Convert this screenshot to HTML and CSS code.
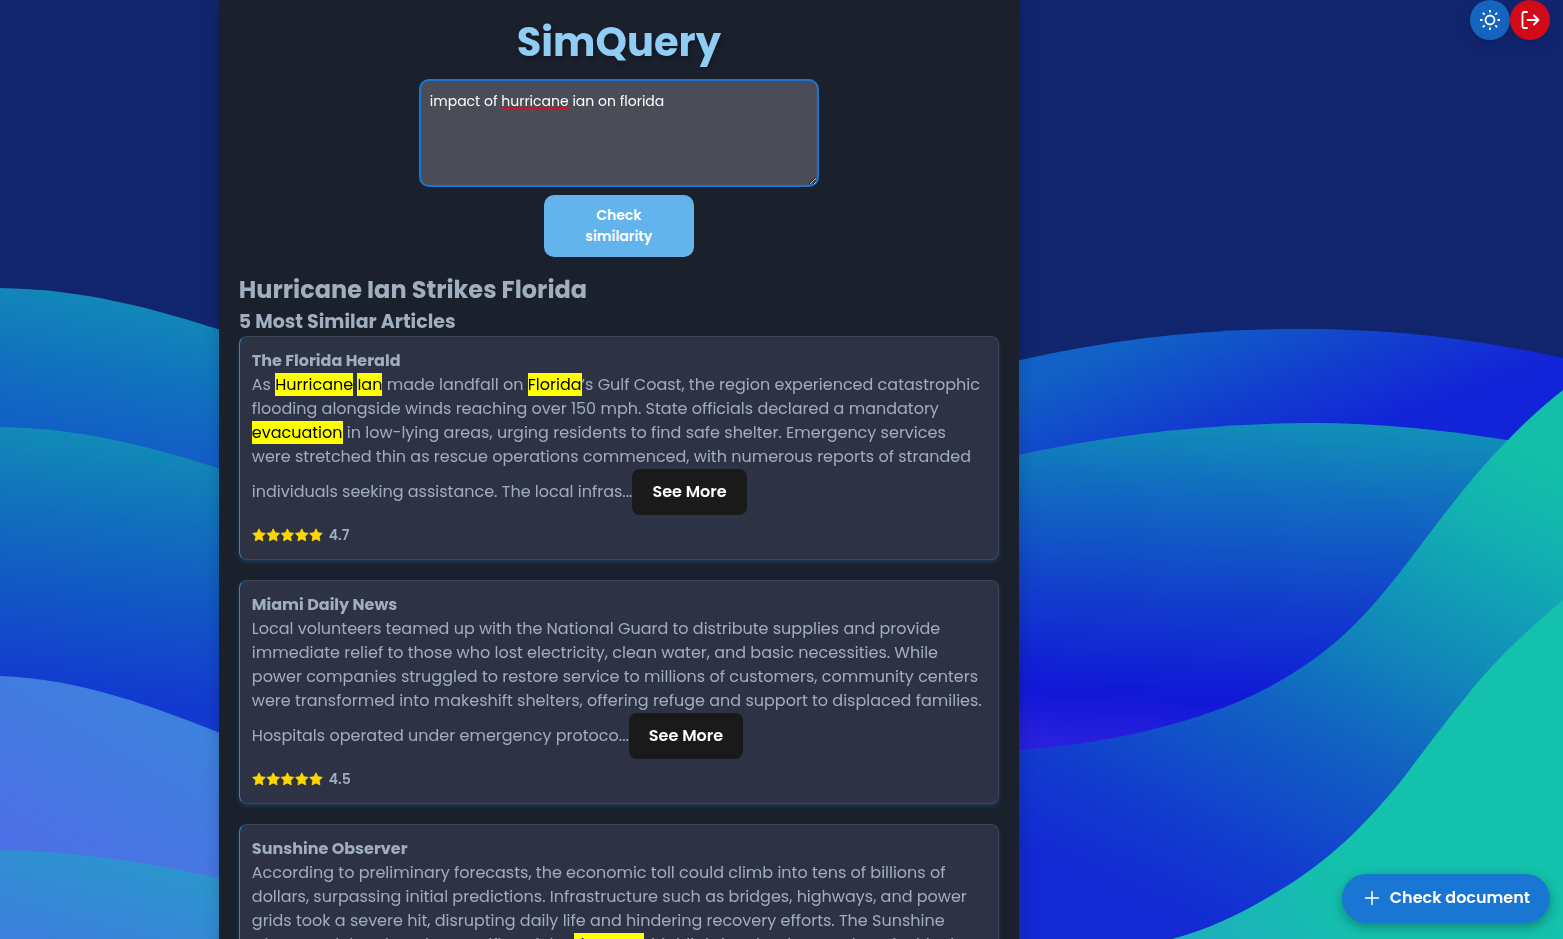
FILE: index.html
```html
<!DOCTYPE html>
<html lang="en">
<head>
<meta charset="utf-8">
<title>SimQuery</title>
<link rel="stylesheet" href="styles.css">
</head>
<body>
<svg class="backdrop" viewBox="0 0 1563 939" preserveAspectRatio="none" aria-hidden="true">
  <defs>
    <linearGradient id="l1" gradientUnits="userSpaceOnUse" x1="60" y1="288" x2="30" y2="470"><stop offset="0" stop-color="#1189b8"/><stop offset=".6" stop-color="#1168c2"/><stop offset="1" stop-color="#1355ca"/></linearGradient>
    <linearGradient id="l2" gradientUnits="userSpaceOnUse" x1="60" y1="420" x2="30" y2="690"><stop offset="0" stop-color="#118fb6"/><stop offset=".4" stop-color="#116abf"/><stop offset="1" stop-color="#1339d0"/></linearGradient>
    <linearGradient id="l3" gradientUnits="userSpaceOnUse" x1="160" y1="690" x2="40" y2="890"><stop offset="0" stop-color="#3c82dc"/><stop offset="1" stop-color="#4f6ee8"/></linearGradient>
    <linearGradient id="l4" gradientUnits="userSpaceOnUse" x1="150" y1="850" x2="120" y2="960"><stop offset="0" stop-color="#2b98cc"/><stop offset="1" stop-color="#3a80dc"/></linearGradient>
    <linearGradient id="r1" gradientUnits="userSpaceOnUse" x1="1180" y1="325" x2="1240" y2="480"><stop offset="0" stop-color="#1161c6"/><stop offset=".6" stop-color="#123bcf"/><stop offset="1" stop-color="#1224d8"/></linearGradient>
    <linearGradient id="r2" gradientUnits="userSpaceOnUse" x1="1240" y1="420" x2="1220" y2="750"><stop offset="0" stop-color="#118fb8"/><stop offset=".25" stop-color="#1168c2"/><stop offset=".55" stop-color="#123ecc"/><stop offset=".85" stop-color="#1118d8"/><stop offset="1" stop-color="#2820dc"/></linearGradient>
    <linearGradient id="r3" gradientUnits="userSpaceOnUse" x1="1500" y1="440" x2="1250" y2="960"><stop offset="0" stop-color="#13bfa8"/><stop offset=".15" stop-color="#12b0b2"/><stop offset=".4" stop-color="#1187ba"/><stop offset=".58" stop-color="#1163c2"/><stop offset=".85" stop-color="#123acf"/><stop offset="1" stop-color="#1229d4"/></linearGradient>
    <linearGradient id="r4" gradientUnits="userSpaceOnUse" x1="1180" y1="960" x2="1330" y2="860"><stop offset="0" stop-color="#20acc0"/><stop offset="1" stop-color="#13c1ac"/></linearGradient>
  </defs>
  <rect width="1563" height="939" fill="#11256f"/>
  <path fill="url(#l1)" d="M0 288C80 289 150 307 230 333V939H0Z"/>
  <path fill="url(#l2)" d="M0 427C80 428 150 446 230 472V939H0Z"/>
  <path fill="url(#l3)" d="M0 676C80 679 150 705 230 737V939H0Z"/>
  <path fill="url(#l4)" d="M0 850C80 852 150 862 230 881V939H0Z"/>
  <path fill="url(#r1)" d="M1000 365C1100 340 1200 329 1300 329C1400 329 1480 340 1563 358V939H1000Z"/>
  <path fill="url(#r2)" d="M1000 459C1100 436 1200 424 1310 423C1380 423 1450 430 1530 444V939H1000Z"/>
  <path fill="url(#r3)" d="M1000 750C1080 750 1200 725 1269 687C1297 672 1325 653 1349 630C1368 612 1386 590 1401 571C1436 525 1470 478 1508 440C1526 421 1545 404 1563 390V939H1000Z"/>
  <path fill="url(#r4)" d="M1150 945L1172 939C1207 930 1240 914 1272 895C1300 879 1325 860 1349 838C1368 820 1386 799 1401 781C1430 743 1458 705 1484 675C1510 646 1537 622 1563 600V945Z"/>
</svg>

<nav class="tools" aria-label="Session">
  <button class="tool tool-theme" type="button" aria-label="Toggle theme">
    <svg viewBox="0 0 24 24" width="24" height="24" fill="none" stroke="currentColor" stroke-width="1.8"><circle cx="12" cy="12" r="4.5"/><path d="M12 2v2.500M12 19.500v2.500M2 12h2.500M19.500 12h2.500M4.900 4.900l1.800 1.800M17.300 17.300l1.800 1.800M4.900 19.100l1.800-1.800M17.300 6.700l1.800-1.800"/></svg>
  </button>
  <button class="tool tool-exit" type="button" aria-label="Log out">
    <svg viewBox="0 0 24 24" width="24" height="24" fill="none" stroke="currentColor" stroke-width="1.800" stroke-linecap="round" stroke-linejoin="round"><path d="M9 4H6a1.500 1.500 0 0 0-1.500 1.500v13A1.500 1.500 0 0 0 6 20H9M9.500 12h11M16 7.500l4.500 4.500-4.500 4.500"/></svg>
  </button>
</nav>

<main class="panel">
  <h1 class="brand">SimQuery</h1>
  <form class="query">
    <textarea class="query-text" aria-label="Query" spellcheck="false">impact of hurricane ian on florida</textarea>
    <svg class="squiggle" width="68" height="4" aria-hidden="true"><defs><pattern id="wave" width="4" height="4" patternUnits="userSpaceOnUse"><path d="M0 3L2 1L4 3" fill="none" stroke="#f00" stroke-width="1.2"/></pattern></defs><rect width="68" height="4" fill="url(#wave)"/></svg>
    <button class="submit" type="button">Check similarity</button>
  </form>

  <h2 class="topic">Hurricane Ian Strikes Florida</h2>
  <h3 class="subtopic">5 Most Similar Articles</h3>

  <article class="card">
    <h4 class="source">The Florida Herald</h4>
    <p class="excerpt">As <mark>Hurricane</mark> <mark>Ian</mark> made landfall on <mark>Florida</mark>’s Gulf Coast, the region experienced catastrophic flooding alongside winds reaching over 150 mph. State officials declared a mandatory <mark>evacuation</mark> in low-lying areas, urging residents to find safe shelter. Emergency services were stretched thin as rescue operations commenced, with numerous reports of stranded individuals seeking assistance. The local infras...<button class="more" type="button">See More</button></p>
    <div class="rating"><svg class="stars" viewBox="0 0 71 14" width="71" height="14" aria-hidden="true"><defs><path id="star" d="M7 .8L8.900 4.700L13.300 5.300L10.200 8.500L10.900 12.900L7 10.900L3.100 12.900L3.800 8.500L.7 5.300L5.100 4.700Z" fill="#ffd700" stroke="#ffd700" stroke-width=".8" stroke-linejoin="round"/></defs><use href="#star"/><use href="#star" x="14.200"/><use href="#star" x="28.400"/><use href="#star" x="42.800"/><use href="#star" x="57"/></svg><span>4.7</span></div>
  </article>

  <article class="card">
    <h4 class="source">Miami Daily News</h4>
    <p class="excerpt">Local volunteers teamed up with the National Guard to distribute supplies and provide immediate relief to those who lost electricity, clean water, and basic necessities. While power companies struggled to restore service to millions of customers, community centers were transformed into makeshift shelters, offering refuge and support to displaced families. Hospitals operated under emergency protoco...<button class="more" type="button">See More</button></p>
    <div class="rating"><svg class="stars" viewBox="0 0 71 14" width="71" height="14" aria-hidden="true"><use href="#star"/><use href="#star" x="14.200"/><use href="#star" x="28.400"/><use href="#star" x="42.800"/><use href="#star" x="57"/></svg><span>4.5</span></div>
  </article>

  <article class="card">
    <h4 class="source">Sunshine Observer</h4>
    <p class="excerpt">According to preliminary forecasts, the economic toll could climb into tens of billions of dollars, surpassing initial predictions. Infrastructure such as bridges, highways, and power grids took a severe hit, disrupting daily life and hindering recovery efforts. The Sunshine Observer delves into the specifics of the <mark>damage</mark>, highlighting the devastation of critical</p>
  </article>
</main>

<button class="upload" type="button">
  <svg viewBox="0 0 24 24" width="24" height="24" fill="none" stroke="currentColor" stroke-width="1.500" stroke-linecap="round" aria-hidden="true"><path d="M12 5.500v13M5.500 12h13"/></svg>
  <span>Check document</span>
</button>
</body>
</html>
```
FILE: styles.css
```css
* {
  box-sizing: border-box;
}

html,
body {
  height: 100%;
}

body {
  margin: 0;
  overflow: hidden;
  font-family: Poppins, Inter, sans-serif;
  font-size: 16px;
  line-height: 24px;
  color: #a0aec0;
  background: #11256f;
}

button,
textarea {
  font: inherit;
}

button {
  border: 0;
  cursor: pointer;
}

h1,
h2,
h3,
h4,
p {
  margin: 0;
}

.backdrop {
  position: fixed;
  inset: 0;
  width: 100%;
  height: 100%;
}

.tools {
  position: fixed;
  top: 0;
  right: 13px;
  display: flex;
}

.tool {
  display: grid;
  place-items: center;
  width: 40px;
  height: 40px;
  padding: 0;
  border-radius: 50%;
  color: #fff;
  box-shadow: 0 4px 12px rgba(0, 0, 0, 0.15);
}

.tool-theme {
  background: #1565c0;
}

.tool-exit {
  background: #d00a18;
}

.panel {
  position: relative;
  width: 100%;
  max-width: 800px;
  min-height: 100%;
  margin-left: 14%;
  padding: 20px;
  background: #1a202c;
  box-shadow: 0 0 15px rgba(0, 0, 0, 0.2);
}

.brand {
  margin-bottom: 15px;
  font-size: 40px;
  line-height: 44px;
  text-align: center;
  color: #90cdf4;
  text-shadow: 1px 2px 4px rgba(0, 0, 0, 0.3);
}

.query {
  position: relative;
  display: flex;
  flex-direction: column;
  align-items: center;
  gap: 8px;
  margin-bottom: 16px;
}

.query-text {
  width: 400px;
  height: 108px;
  padding: 9px;
  border: 2px solid #1976d2;
  border-radius: 10px;
  outline: 0;
  font-size: 14px;
  line-height: 22px;
  color: #fff;
  background: #4a4d57;
}

.squiggle {
  position: absolute;
  top: 27px;
  left: 262px;
}

.submit {
  width: 150px;
  padding: 10px 36px;
  border-radius: 10px;
  font-size: 14px;
  font-weight: 600;
  line-height: 21px;
  color: #fff;
  background: #63b3ed;
}

.topic {
  font-size: 24px;
  line-height: 34px;
}

.subtopic {
  font-size: 19px;
  line-height: 29px;
}

.card {
  margin-bottom: 20px;
  padding: 12px;
  border: 1px solid #3c4657;
  border-left-color: #3182ce;
  border-radius: 8px;
  background: #2d3244;
  box-shadow: 0 2px 5px rgba(49, 130, 206, 0.3);
}

.source {
  font-size: 16px;
  font-weight: 700;
}

mark {
  color: #000;
  background: #ff0;
}

.more {
  padding: 11px 20px;
  border-radius: 8px;
  font-weight: 600;
  color: #fff;
  background: #1a1a1a;
}

.rating {
  display: flex;
  align-items: center;
  gap: 6px;
  margin-top: 8px;
  font-size: 14px;
  font-weight: 600;
}

.upload {
  position: fixed;
  right: 13px;
  bottom: 16px;
  display: flex;
  align-items: center;
  gap: 6px;
  padding: 12px 20px 13px 18px;
  border-radius: 25px;
  font-weight: 600;
  color: #fff;
  background: #1976d2;
  box-shadow: 0 4px 12px rgba(0, 0, 0, 0.3);
}
```
